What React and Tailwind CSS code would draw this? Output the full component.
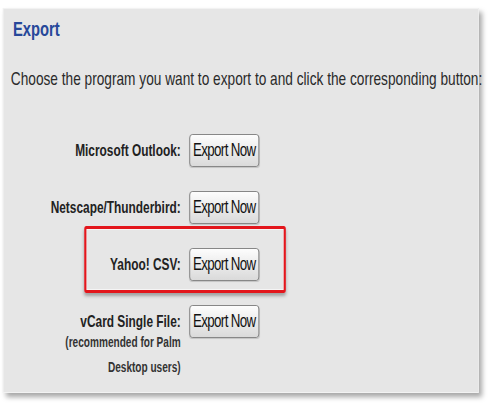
import React from "react";

const rows = [
  { label: "Microsoft Outlook:" },
  { label: "Netscape/Thunderbird:" },
  { label: "Yahoo! CSV:", highlight: true },
  { label: "vCard Single File:", note: "(recommended for Palm Desktop users)" },
];

function ExportButton() {
  return (
    <button className="w-[97px] h-[33px] shrink-0 rounded-[4px] border border-[#777] bg-gradient-to-b from-[#fdfdfd] to-[#dadada] text-[18.5px] tracking-[-0.9px] text-[#111] leading-none shadow-[0_1px_1px_rgba(0,0,0,0.15)]">
      Export Now
    </button>
  );
}

export default function App() {
  return (
    <div className="w-[490px] h-[408px] bg-white overflow-hidden font-['Liberation_Sans',Arial,sans-serif]">
      {/* the screenshot is squeezed sideways, so the whole sheet is drawn wide and scaled */}
      <div className="w-[680px] origin-top-left scale-x-[0.72] pt-[8px] pl-[4px]">
        <div className="w-[661px] h-[385px] bg-[#e6e6e6] border border-[#f2f2f2] shadow-[4px_4px_6px_rgba(0,0,0,0.35)]">
          <h2 className="pl-[13px] pt-[8px] text-[20.5px] leading-[24px] font-bold text-[#27489a]">Export</h2>
          <p className="pl-[10px] mt-[27px] text-[19px] leading-[22px] text-[#2a2a2a] whitespace-nowrap">
            Choose the program you want to export to and click the corresponding button:
          </p>
          <div className="mt-[44px] pl-[60px] flex flex-col gap-[24px]">
            {rows.map((row, i) => (
              <div key={i} className="relative flex items-start gap-[12px]">
                <div className="w-[186px] text-right text-[#222] font-bold">
                  <div className="text-[16.5px] leading-[33px]">{row.label}</div>
                  {row.note && (
                    <div className="-mt-[8px] text-[14px] leading-[25px] text-[#333]">{row.note}</div>
                  )}
                </div>
                <ExportButton />
                {row.highlight && (
                  <div className="absolute left-[52px] -top-[22px] w-[280px] h-[67px] rounded-[3px] border-[3px] border-[#e3161c] shadow-[inset_0_0_0_1px_rgba(255,255,255,0.6),0_3px_4px_rgba(0,0,0,0.3)]" />
                )}
              </div>
            ))}
          </div>
        </div>
      </div>
    </div>
  );
}
